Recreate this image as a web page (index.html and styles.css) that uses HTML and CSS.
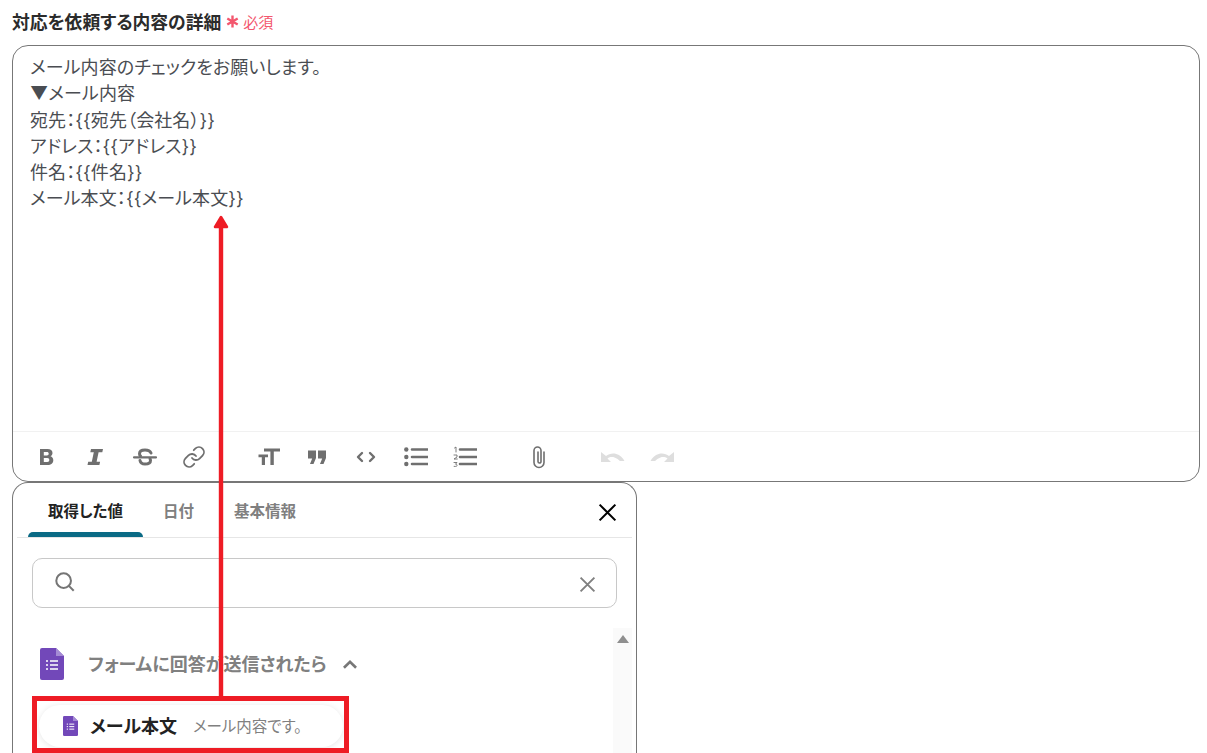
FILE: index.html
```html
<!DOCTYPE html>
<html lang="ja">
<head>
    <meta charset="UTF-8">
    <meta name="viewport" content="width=device-width, initial-scale=1.0">
    <title>対応を依頼する内容の詳細</title>
    <link rel="stylesheet" href="styles.css">
</head>
<body>
    <div class="page">
        <div class="fieldLabel">
            <span class="labelText">対応を依頼する内容の詳細</span>
            <span class="required"><svg class="star" viewBox="0 0 12 12"><path d="M6 .5v11M1.200 3.200l9.600 5.600M10.800 3.200l-9.600 5.600" /></svg>必須</span>
        </div>
        <div class="editor">
            <div class="editorText">
                <p>メール内容のチェックをお願いします。</p>
                <p>▼メール内容</p>
                <p>宛先：{{宛先（会社名）}}</p>
                <p>アドレス：{{アドレス}}</p>
                <p>件名：{{件名}}</p>
                <p>メール本文：{{メール本文}}</p>
            </div>
            <div class="toolbar">
                <div class="toolGroup">
                    <svg class="tool" viewBox="0 0 24 24"><path class="solid" fill-rule="evenodd" d="M6 4h7.500c3 0 5 1.600 5 4 0 1.500-.8 2.700-2 3.300 1.700.6 2.800 2 2.800 3.900 0 2.900-2.200 4.800-5.600 4.800H6zm3.800 3v3.400h3.100c1.100 0 1.800-.7 1.800-1.700S14 7 12.900 7zm0 6v4h3.500c1.300 0 2-.8 2-2s-.7-2-2-2z" /></svg>
                    <svg class="tool" viewBox="0 0 24 24"><path class="solid" d="M8 4h12l-.7 3.300h-3.700l-2 9.400h3.500L16.400 20H4.500l.7-3.300h3.600l2-9.400H7.300z" /></svg>
                    <svg class="tool" viewBox="0 0 24 24"><path class="line" stroke-width="3" d="M18 8C17 5.500 15 5 12 5 8.500 5 6.500 6.500 6.500 8.700c0 1 .4 1.800 1 2.300M7 15.500C7.500 18 9.500 19 12 19c3.500 0 5.500-1.500 5.500-3.500 0-.7-.2-1.300-.5-1.800" /><path class="line" stroke-width="2.200" stroke-linecap="butt" d="M1 12.300h22" /></svg>
                    <svg class="tool" viewBox="0 0 24 24"><path class="line thin" d="M10 13a5 5 0 0 0 7.540.54l3-3a5 5 0 0 0-7.070-7.070l-1.720 1.710" /><path class="line thin" d="M14 11a5 5 0 0 0-7.540-.54l-3 3a5 5 0 0 0 7.070 7.070l1.710-1.710" /></svg>
                </div>
                <div class="toolGroup">
                    <svg class="tool" viewBox="0 0 24 24"><path class="solid" d="M8 3.500h16v3h-6.200V20h-3.400V6.500H8zM2.500 9.500h9.500v2.700H9v7.800H5.800v-7.800H2.500z" /></svg>
                    <svg class="tool" viewBox="0 0 24 24"><path class="solid" d="M3 5.500h8v7.500L8.500 19H5l2.200-5.500H3zM13 5.500h8v7.500L18.500 19H15l2.200-5.500H13z" /></svg>
                    <svg class="tool" viewBox="0 0 24 24"><path class="line" stroke-width="2.400" d="M8 8l-4 4 4 4M16 8l4 4-4 4" /></svg>
                    <svg class="tool" viewBox="0 0 24 24"><circle class="solid" cx="2.300" cy="4.500" r="2.200" /><circle class="solid" cx="2.300" cy="12" r="2.200" /><circle class="solid" cx="2.300" cy="19" r="2.200" /><path class="line" stroke-width="2.600" stroke-linecap="butt" d="M8 4.500h16M8 12h16M8 19h16" /></svg>
                    <svg class="tool" viewBox="0 0 24 24"><path class="line" stroke-width=".9" stroke-linecap="butt" d="M1.500 3l1.500-1v5M1 10h3v2l-3 2h3.300M1 17.500h3l-1.500 1.700c1.200 0 1.600.6 1.600 1.200s-.6 1.300-3 1" /><path class="line" stroke-width="2.600" stroke-linecap="butt" d="M7 4.500h17M7 12h17M7 19h17" /></svg>
                </div>
                <div class="toolGroup">
                    <svg class="tool" viewBox="0 0 24 24"><path class="line" stroke-width="1.600" d="M17 7v10.500a5 5 0 0 1-10 0V5.500a3.500 3.500 0 0 1 7 0v11a1.500 1.500 0 0 1-3 0V7" /></svg>
                </div>
                <div class="toolGroup">
                    <svg class="tool off" viewBox="0 0 24 24"><path class="solid" d="M0 7v10h10l-3.500-3.500c2-1.400 4.500-1.800 7-1 2.300.7 4 2.100 5.400 3.500h4.600c-1.500-3.300-4.500-6-8.200-7.100-3.500-1-7.500-.3-10.300 2.100z" /></svg>
                    <svg class="tool off" viewBox="0 0 24 24"><path class="solid" d="M24 7v10H14l3.500-3.500c-2-1.400-4.500-1.800-7-1-2.300.7-4 2.100-5.400 3.500H.5C2 12.700 5 10 8.700 8.900c3.500-1 7.500-.3 10.300 2.100z" /></svg>
                </div>
            </div>
        </div>
        <div class="picker">
            <div class="tabs">
                <div class="tab active">取得した値</div>
                <div class="tab">日付</div>
                <div class="tab">基本情報</div>
                <svg class="closeIcon" viewBox="0 0 20 20"><path d="M2.500 2.500l15 15M17.500 2.500l-15 15" /></svg>
            </div>
            <div class="search">
                <svg class="searchIcon" viewBox="0 0 24 24"><circle cx="10.500" cy="10.500" r="8" /><path d="M16.500 16.500l5 5" /></svg>
                <svg class="clearIcon" viewBox="0 0 16 16"><path d="M1.500 1.500l13 13M14.500 1.500l-13 13" /></svg>
            </div>
            <div class="listArea">
                <div class="list">
                    <div class="group">
                        <svg class="formIcon big" viewBox="0 0 24 32"><path class="sheet" d="M2 0h14l8 8v22a2 2 0 0 1-2 2H2a2 2 0 0 1-2-2V2a2 2 0 0 1 2-2z" /><path class="fold" d="M16 0l8 8h-8z" /><path class="rows" d="M6 13h2M10 13h8M6 17h2M10 17h8M6 21h2M10 21h8" /></svg>
                        <span class="groupName">フォームに回答が送信されたら</span>
                        <svg class="chevron" viewBox="0 0 14 10"><path d="M1.500 8L7 2.500 12.500 8" /></svg>
                    </div>
                    <div class="item">
                        <svg class="formIcon small" viewBox="0 0 24 32"><path class="sheet" d="M2 0h14l8 8v22a2 2 0 0 1-2 2H2a2 2 0 0 1-2-2V2a2 2 0 0 1 2-2z" /><path class="fold" d="M16 0l8 8h-8z" /><path class="rows" d="M6 13h2M10 13h8M6 17h2M10 17h8M6 21h2M10 21h8" /></svg>
                        <span class="itemName">メール本文</span>
                        <span class="itemDesc">メール内容です。</span>
                    </div>
                </div>
                <div class="scrollbar"><span class="scrollUp"></span></div>
            </div>
        </div>

        <svg class="arrow" viewBox="0 0 16 482"><path class="arrowHead" d="M8 2L14 12H2z" /><path d="M5.800 10h4.400v472H5.800z" /></svg>
        <div class="redBox"></div>
    </div>
</body>
</html>
```

FILE: styles.css
```css
html, body{
    margin: 0;
    height: 753px;
    overflow: hidden;
    background: #fff;
}

.page{
    position: relative;
    height: 753px;
    overflow: hidden;
    padding: 10px 7px 0 12px;
    box-sizing: border-box;
    font-family: "Noto Sans CJK JP", "Noto Sans", sans-serif;
    font-feature-settings: "palt";
    color: #4a4d52;
}

.fieldLabel{
    display: flex;
    align-items: center;
    gap: 5px;
    height: 22px;
    margin-bottom: 13px;
}

.labelText{
    font-size: 17.800px;
    font-weight: 700;
    color: #2b2b2b;
}

.required{
    display: flex;
    align-items: center;
    gap: 4px;
    font-size: 15px;
    color: #f3576e;
}

.star{
    width: 13px;
    height: 13px;
    fill: none;
    stroke: #f3576e;
    stroke-width: 2.200;
}

.editor{
    height: 437px;
    box-sizing: border-box;
    border: 1px solid #777;
    border-radius: 16px;
    display: flex;
    flex-direction: column;
}

.editorText{
    flex: 1;
    padding: 9px 17px;
    font-family: "Inter", "Noto Sans CJK JP", sans-serif;
    font-size: 18px;
    letter-spacing: .1px;
    line-height: 26.300px;
}

.editorText p{
    margin: 0;
}

.toolbar{
    display: flex;
    align-items: center;
    height: 49px;
    border-top: 1px solid #f1f1f1;
    padding-left: 21px;
    gap: 50px;
}

.toolGroup{
    display: flex;
    gap: 25.300px;
}

.tool{
    width: 24px;
    height: 24px;
    flex: none;
    color: #6f6f6f;
}

.tool.off{
    color: #dedede;
}

.solid{
    fill: currentColor;
}

.line{
    fill: none;
    stroke: currentColor;
    stroke-linecap: round;
    stroke-linejoin: round;
}

.thin{
    stroke-width: 1.800;
}

.picker{
    width: 625px;
    height: 290px;
    box-sizing: border-box;
    border: 1px solid #777;
    border-bottom: none;
    border-radius: 16px 16px 0 0;
    padding: 0 4px;
}

.tabs{
    position: relative;
    display: flex;
    height: 54px;
    border-bottom: 1px solid #e6e6e6;
    padding-left: 11px;
}

.tab{
    position: relative;
    box-sizing: border-box;
    width: 71px;
    padding-top: 16px;
    text-align: center;
    height: 54px;
    font-size: 15.500px;
    line-height: 22px;
    font-weight: 700;
    color: #808080;
}

.tab:nth-child(3){
    width: 102px;
}

.tab.active{
    width: 115px;
    color: #222;
}

.tab.active::after{
    content: "";
    position: absolute;
    left: 0;
    right: 0;
    bottom: 0;
    height: 5px;
    background: #0a6a85;
    border-radius: 5px 5px 0 0;
}

.closeIcon{
    position: absolute;
    right: 14px;
    top: 19px;
    width: 21px;
    height: 21px;
    fill: none;
    stroke: #000;
    stroke-width: 2;
}

.search{
    display: flex;
    align-items: center;
    justify-content: space-between;
    margin: 20px 15px 20px;
    height: 50px;
    box-sizing: border-box;
    border: 1px solid #c8c8c8;
    border-radius: 10px;
    padding: 0 20px 0 21px;
}

.searchIcon{
    width: 22px;
    height: 22px;
    margin-top: -2px;
    fill: none;
    stroke: #757575;
    stroke-width: 2.200;
}

.clearIcon{
    width: 17px;
    height: 17px;
    margin-top: 3px;
    fill: none;
    stroke: #808080;
    stroke-width: 1.800;
}

.listArea{
    display: flex;
    height: 130px;
}

.list{
    flex: 1;
    padding: 20px 0 0 23px;
}

.group{
    display: flex;
    align-items: center;
    height: 32px;
}

.groupName{
    margin-left: 24px;
    font-size: 18px;
    line-height: 30px;
    margin-top: -2px;
    font-weight: 700;
    color: #808080;
}

.chevron{
    margin-left: 16px;
    width: 16px;
    height: 11px;
    fill: none;
    stroke: #777;
    stroke-width: 2.400;
}

.formIcon.big{
    width: 24px;
    height: 32px;
}

.formIcon.small{
    width: 15px;
    height: 20px;
}

.sheet{
    fill: #7248b9;
}

.fold{
    fill: #a48ad4;
}

.rows{
    stroke: #fff;
    stroke-width: 1.600;
    fill: none;
}

.item{
    display: flex;
    align-items: center;
    margin: 25px 0 0 -1px;
    width: 304px;
    height: 42px;
    box-sizing: border-box;
    padding-left: 24px;
    border-radius: 21px;
    background: #fff;
    box-shadow: 0 1px 6px rgba(0, 0, 0, .1);
}

.itemName{
    margin: -3px 0 0 12px;
    font-size: 18px;
    font-weight: 700;
    color: #222;
}

.itemDesc{
    margin: -2px 0 0 16px;
    font-size: 15.500px;
    color: #808080;
}

.scrollbar{
    width: 19px;
    background: #fafafa;
    display: flex;
    justify-content: center;
    padding-top: 7px;
    box-sizing: border-box;
}

.scrollUp{
    width: 0;
    height: 0;
    border-left: 6.500px solid transparent;
    border-right: 6.500px solid transparent;
    border-bottom: 8px solid #8f8f8f;
}

/* annotation drawn over the screenshot */
.arrow{
    position: absolute;
    left: 212.500px;
    top: 215px;
    width: 16px;
    height: 482px;
    fill: #ee1c25;
}

.arrowHead{
    stroke: #ee1c25;
    stroke-width: 2.500;
    stroke-linejoin: round;
}

.redBox{
    position: absolute;
    left: 32px;
    top: 696px;
    width: 317px;
    height: 57px;
    box-sizing: border-box;
    border: 5px solid #ee1c25;
}
```
